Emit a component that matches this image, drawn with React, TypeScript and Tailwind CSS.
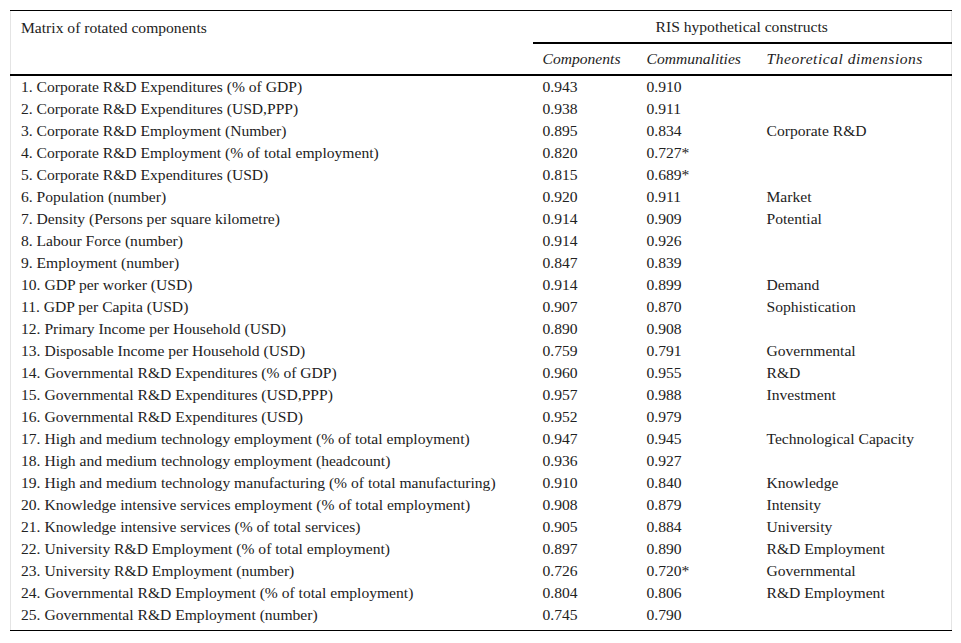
const rows: [string, string, string, string][] = [
  ["1. Corporate R&D Expenditures (% of GDP)", "0.943", "0.910", ""],
  ["2. Corporate R&D Expenditures (USD,PPP)", "0.938", "0.911", ""],
  ["3. Corporate R&D Employment (Number)", "0.895", "0.834", "Corporate R&D"],
  ["4. Corporate R&D Employment (% of total employment)", "0.820", "0.727*", ""],
  ["5. Corporate R&D Expenditures (USD)", "0.815", "0.689*", ""],
  ["6. Population (number)", "0.920", "0.911", "Market"],
  ["7. Density (Persons per square kilometre)", "0.914", "0.909", "Potential"],
  ["8. Labour Force (number)", "0.914", "0.926", ""],
  ["9. Employment (number)", "0.847", "0.839", ""],
  ["10. GDP per worker (USD)", "0.914", "0.899", "Demand"],
  ["11. GDP per Capita (USD)", "0.907", "0.870", "Sophistication"],
  ["12. Primary Income per Household (USD)", "0.890", "0.908", ""],
  ["13. Disposable Income per Household (USD)", "0.759", "0.791", "Governmental"],
  ["14. Governmental R&D Expenditures (% of GDP)", "0.960", "0.955", "R&D"],
  ["15. Governmental R&D Expenditures (USD,PPP)", "0.957", "0.988", "Investment"],
  ["16. Governmental R&D Expenditures (USD)", "0.952", "0.979", ""],
  ["17. High and medium technology employment (% of total employment)", "0.947", "0.945", "Technological Capacity"],
  ["18. High and medium technology employment (headcount)", "0.936", "0.927", ""],
  ["19. High and medium technology manufacturing (% of total manufacturing)", "0.910", "0.840", "Knowledge"],
  ["20. Knowledge intensive services employment (% of total employment)", "0.908", "0.879", "Intensity"],
  ["21. Knowledge intensive services (% of total services)", "0.905", "0.884", "University"],
  ["22. University R&D Employment (% of total employment)", "0.897", "0.890", "R&D Employment"],
  ["23. University R&D Employment (number)", "0.726", "0.720*", "Governmental"],
  ["24. Governmental R&D Employment (% of total employment)", "0.804", "0.806", "R&D Employment"],
  ["25. Governmental R&D Employment (number)", "0.745", "0.790", ""],
];

export default function App() {
  return (
    <div className="min-h-[643px] bg-white pt-[10px] pl-[10px] font-['Liberation_Serif',serif] text-[15.6px] text-[#222]">
      <table className="w-[941px] table-fixed border-collapse border-x border-x-[#e4e4e4]">
        <colgroup>
          <col className="w-[522px]" />
          <col className="w-[104px]" />
          <col className="w-[120px]" />
          <col className="w-[195px]" />
        </colgroup>
        <thead>
          <tr className="border-t border-t-black">
            <td rowSpan={2} className="h-[32px] align-top px-[10px] pt-[7px] leading-[20px]">
              Matrix of rotated components
            </td>
            <td colSpan={3} className="h-[32px] border-b-2 border-b-black text-center leading-[20px] pt-[1px]">
              RIS hypothetical constructs
            </td>
          </tr>
          <tr className="border-b-2 border-b-black">
            <td className="h-[32px] pl-[10px] italic leading-[20px]">Components</td>
            <td className="h-[32px] pl-[10px] italic leading-[20px]">Communalities</td>
            <td className="h-[32px] pl-[10px] italic leading-[20px] tracking-[0.5px] whitespace-nowrap">
              Theoretical dimensions
            </td>
          </tr>
        </thead>
        <tbody className="border-b border-b-black">
          {rows.map((r, i) => (
            <tr key={i} className={i === rows.length - 1 ? "h-[27px] align-top" : "h-[22px]"}>
              <td className="px-[10px] leading-[22px] whitespace-nowrap">{r[0]}</td>
              <td className="pl-[10px] leading-[22px]">{r[1]}</td>
              <td className="pl-[10px] leading-[22px]">{r[2]}</td>
              <td className="pl-[10px] leading-[22px] whitespace-nowrap">{r[3]}</td>
            </tr>
          ))}
        </tbody>
      </table>
    </div>
  );
}
